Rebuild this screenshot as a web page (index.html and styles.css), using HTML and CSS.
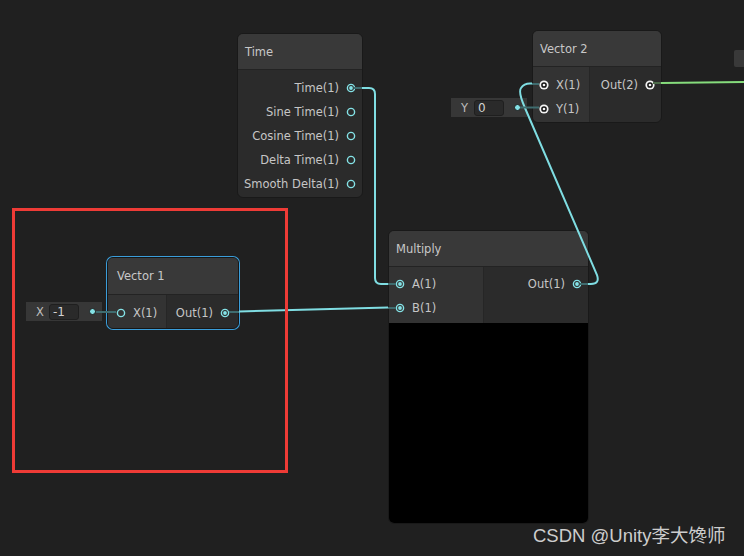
FILE: index.html
```html
<!DOCTYPE html>
<html>
<head>
<meta charset="utf-8">
<link rel="stylesheet" href="styles.css">
</head>
<body>
<div class="canvas">

  <div class="node node-time">
    <div class="node-title">Time</div>
    <div class="node-body">
      <div class="col col-out wide">
        <div class="row out"><span>Time(1)</span><svg class="port" viewBox="-5 -5 10 10"><circle r="3.6" class="ring"/><circle r="1.9" class="dot"/></svg></div>
        <div class="row out"><span>Sine Time(1)</span><svg class="port" viewBox="-5 -5 10 10"><circle r="3.6" class="ring"/></svg></div>
        <div class="row out"><span>Cosine Time(1)</span><svg class="port" viewBox="-5 -5 10 10"><circle r="3.6" class="ring"/></svg></div>
        <div class="row out"><span>Delta Time(1)</span><svg class="port" viewBox="-5 -5 10 10"><circle r="3.6" class="ring"/></svg></div>
        <div class="row out"><span>Smooth Delta(1)</span><svg class="port" viewBox="-5 -5 10 10"><circle r="3.6" class="ring"/></svg></div>
      </div>
    </div>
  </div>

  <div class="node node-vec2">
    <div class="node-title">Vector 2</div>
    <div class="node-body">
      <div class="col col-in in-vec2">
        <div class="row in"><svg class="port" viewBox="-5 -5 10 10"><circle r="4.6" class="white"/><circle r="2.1" class="black"/><circle r="0.9" class="white"/></svg><span>X(1)</span></div>
        <div class="row in"><svg class="port" viewBox="-5 -5 10 10"><circle r="4.6" class="white"/><circle r="2.1" class="black"/><circle r="0.9" class="white"/></svg><span>Y(1)</span></div>
      </div>
      <div class="col col-out wide">
        <div class="row out"><span>Out(2)</span><svg class="port" viewBox="-5 -5 10 10"><circle r="4.6" class="white"/><circle r="2.1" class="black"/><circle r="0.9" class="white"/></svg></div>
      </div>
    </div>
  </div>

  <div class="node node-mult">
    <div class="node-title">Multiply</div>
    <div class="node-body">
      <div class="col col-in in-mult">
        <div class="row in"><svg class="port" viewBox="-5 -5 10 10"><circle r="3.6" class="ring"/><circle r="1.9" class="dot"/></svg><span>A(1)</span></div>
        <div class="row in"><svg class="port" viewBox="-5 -5 10 10"><circle r="3.6" class="ring"/><circle r="1.9" class="dot"/></svg><span>B(1)</span></div>
      </div>
      <div class="col col-out wide">
        <div class="row out"><span>Out(1)</span><svg class="port" viewBox="-5 -5 10 10"><circle r="3.6" class="ring"/><circle r="1.9" class="dot"/></svg></div>
      </div>
    </div>
    <div class="preview"></div>
  </div>

  <div class="node node-vec1">
    <div class="node-title">Vector 1</div>
    <div class="node-body">
      <div class="col col-in in-vec1">
        <div class="row in"><svg class="port" viewBox="-5 -5 10 10"><circle r="3.6" class="ring"/></svg><span>X(1)</span></div>
      </div>
      <div class="col col-out wide">
        <div class="row out"><span>Out(1)</span><svg class="port" viewBox="-5 -5 10 10"><circle r="3.6" class="ring"/><circle r="1.9" class="dot"/></svg></div>
      </div>
    </div>
  </div>

  <div class="field field-x">
    <span class="field-label">X</span>
    <span class="field-box">-1</span>
    <span class="field-dot"></span>
  </div>

  <div class="field field-y">
    <span class="field-label">Y</span>
    <span class="field-box">0</span>
    <span class="field-dot"></span>
  </div>

  <div class="offscreen-node"></div>

  <svg class="edges" viewBox="0 0 744 556">
    <path class="stub" d="M354 88 H362"/>
    <path class="edge" d="M362 88 H369 Q375 88 375 94 V278 Q375 284 381 284 H388"/>
    <path class="stub" d="M388 284 H396"/>

    <path class="stub" d="M229 312 H239"/>
    <path class="edge" d="M239 311.5 L388 307.5"/>
    <path class="stub" d="M388 308 H396"/>

    <path class="stub" d="M580 284 H588"/>
    <path class="edge" d="M588 284 H591 Q600 284 597 275 L525 108 Q518 92 521 88 Q524 83.5 530 83.5 H532"/>
    <path class="stub" d="M532 84 H539"/>

    <path class="stub" d="M520 107.5 H539"/>
    <path class="stub" d="M96 312 H116"/>

    <path class="stub-green" d="M653 83 H661"/>
    <path class="edge-green" d="M661 83 L744 82"/>
  </svg>

  <div class="frame"></div>

  <div class="watermark">CSDN @Unity李大馋师</div>
</div>
</body>
</html>
```

FILE: styles.css
```css
* { box-sizing: border-box; }

html, body {
  margin: 0;
  padding: 0;
  background: #202020;
}

.canvas {
  position: relative;
  width: 744px;
  height: 556px;
  overflow: hidden;
  background: #202020;
  font-family: "DejaVu Sans", Verdana, sans-serif;
  font-size: 11.5px;
  color: #c6c6c6;
}

/* ---------- nodes ---------- */
.node {
  position: absolute;
  display: flex;
  flex-direction: column;
  background: #2b2b2b;
  border: 1px solid #191919;
  border-radius: 6px;
  overflow: hidden;
}

.node-title {
  height: 36px;
  flex: none;
  display: flex;
  align-items: center;
  padding-left: 7px;
  background: #393939;
  border-bottom: 1px solid #232323;
  color: #c8c8c8;
  font-size: 11.5px;
}

.node-body {
  display: flex;
}

.col {
  display: flex;
  flex-direction: column;
  padding-top: 6px;
  padding-bottom: 1px;
}

.col-in {
  background: #333333;
  border-right: 1px solid #262626;
}

.col-out.wide { flex: 1; }

.row {
  height: 24px;
  display: flex;
  align-items: center;
  white-space: nowrap;
}

.row.out {
  justify-content: flex-end;
  gap: 7px;
  padding-right: 6px;
}

.row.in {
  gap: 7px;
  padding-left: 6px;
}

.port {
  width: 10px;
  height: 10px;
  flex: none;
}

.port .ring { fill: none; stroke: #84e2e6; stroke-width: 1.4; }
.port .dot { fill: #84e2e6; }
.port .white { fill: #f4f4f4; }
.port .black { fill: none; stroke: #111111; stroke-width: 1.5; }

/* Time */
.node-time { left: 237px; top: 33px; width: 126px; }
.node-time .col { padding-bottom: 1px; }

/* Vector 2 */
.node-vec2 { left: 532px; top: 30px; width: 130px; }
.node-vec2 .node-title { height: 36px; }
.in-vec2 { width: 57px; }
.node-vec2 .col { padding-top: 6px; padding-bottom: 1px; }

/* Multiply */
.node-mult { left: 388px; top: 230px; width: 201px; height: 294px; }
.in-mult { width: 95px; }
.node-mult .col { padding-top: 5px; padding-bottom: 3px; }
.preview {
  flex: 1;
  background: #000000;
}

/* Vector 1 */
.node-vec1 {
  left: 107px;
  top: 257px;
  width: 132px;
  border-color: #161616;
  box-shadow: 0 0 0 1px #3b9dd9;
}
.node-vec1 .node-title { height: 37px; padding-left: 9px; }
.in-vec1 { width: 59px; }
.node-vec1 .row.in { padding-left: 8px; }
.node-vec1 .row.out { padding-right: 8px; gap: 7px; }
.node-vec1 .col { padding-top: 6px; padding-bottom: 3px; }

/* ---------- inline value fields ---------- */
.field {
  position: absolute;
  width: 76px;
  height: 19px;
  background: #373737;
  display: flex;
  align-items: center;
  padding-left: 10px;
  padding-right: 6px;
}

.field-x { left: 26px; top: 302px; }
.field-y { left: 451px; top: 98px; }

.field-label {
  color: #bdbdbd;
  width: 13px;
}

.field-box {
  width: 30px;
  height: 16px;
  background: #2a2a2a;
  border: 1px solid #1f1f1f;
  border-radius: 3px;
  color: #d2d2d2;
  font-size: 12px;
  line-height: 14px;
  padding-left: 3px;
}

.field-dot {
  margin-left: auto;
  width: 7px;
  height: 7px;
  border-radius: 50%;
  background: #84e2e6;
  border: 1.5px solid #1e1e1e;
}

.offscreen-node {
  position: absolute;
  left: 734px;
  top: 50px;
  width: 14px;
  height: 17px;
  background: #393939;
  border-radius: 2px;
}

/* ---------- edges ---------- */
.edges {
  position: absolute;
  left: 0;
  top: 0;
  width: 744px;
  height: 556px;
  pointer-events: none;
}

.edge {
  fill: none;
  stroke: #7fdde2;
  stroke-width: 2;
}

.stub {
  fill: none;
  stroke: #3f6c6f;
  stroke-width: 2;
}

.edge-green {
  fill: none;
  stroke: #86dc7c;
  stroke-width: 2;
}

.stub-green {
  fill: none;
  stroke: #4c6a49;
  stroke-width: 2;
}

/* ---------- annotation ---------- */
.frame {
  position: absolute;
  left: 12px;
  top: 208px;
  width: 276px;
  height: 265px;
  border: 3px solid #ee3b36;
}

.watermark {
  position: absolute;
  left: 533px;
  top: 526px;
  font-family: "Liberation Sans", Arial, "Noto Sans CJK SC", sans-serif;
  font-size: 18.5px;
  line-height: 20px;
  color: #cdcdcd;
  white-space: nowrap;
}
```
